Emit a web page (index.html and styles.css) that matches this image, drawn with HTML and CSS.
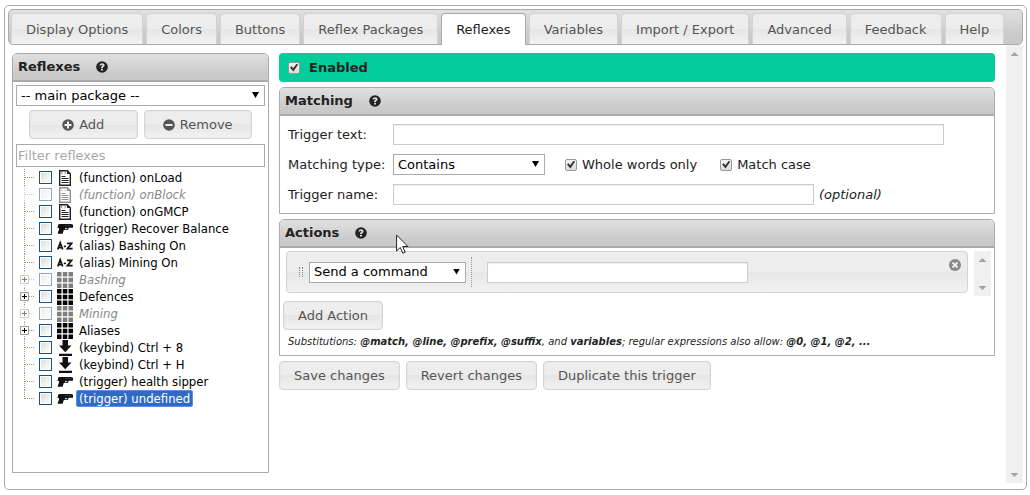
FILE: index.html
```html
<!DOCTYPE html>
<html lang="en">
<head>
<meta charset="utf-8">
<title>Reflexes</title>
<link rel="stylesheet" href="styles.css">
</head>
<body>
<svg class="defs" aria-hidden="true">
  <symbol id="help" viewBox="0 0 12 12"><circle cx="6" cy="6" r="5.8" fill="#222"/><path d="M3.5 4.600C3.700 2.900 4.800 2.200 6.100 2.200c1.400 0 2.500.8 2.500 2.100 0 1.600-1.700 1.600-1.700 2.700H5c0-1.900 1.500-1.900 1.500-2.600 0-.4-.3-.6-.6-.6s-.6.3-.7.8zM5 7.700h1.900v1.700H5z" fill="#ddd"/></symbol>
  <symbol id="plus" viewBox="0 0 12 12"><circle cx="6" cy="6" r="5.8" fill="#555"/><path d="M5 2.500h2V5h2.500v2H7v2.500H5V7H2.500V5H5z" fill="#eee"/></symbol>
  <symbol id="minus" viewBox="0 0 12 12"><circle cx="6" cy="6" r="5.8" fill="#555"/><path d="M2.500 5h7v2h-7z" fill="#eee"/></symbol>
  <symbol id="remove" viewBox="0 0 12 12"><circle cx="6" cy="6" r="6" fill="#888"/><path d="M4.200 2.800 6 4.600l1.800-1.800 1.400 1.400L7.400 6l1.800 1.800-1.400 1.400L6 7.400 4.200 9.200 2.800 7.800 4.600 6 2.800 4.200z" fill="#eee"/></symbol>
  <symbol id="script" viewBox="0 0 16 16"><path d="M2.700.7h7.600l3 3v11.600H2.700z" fill="#fff" stroke="#222" stroke-width="1.400"/><path d="M10 .5V4h3.500z" fill="#222"/><path d="m5.500 2-1.200 1 1.200 1M7.500 2l1.200 1-1.200 1" fill="none" stroke="#555" stroke-width=".8"/><path d="M4.500 6.500h4M4.500 8.500h7M4.500 10.500h7M4.500 12.500h7" stroke="#222"/></symbol>
  <symbol id="gun" viewBox="0 0 16 16"><path d="M1 3.500h1l.5-.5h12l.3.500H16v3.200h-4.300c-.2 1.600-.8 2.300-2 2.300H6.800L5.600 12.700H.8c-.3-.8.8-2.700 1.200-4.200L1.900 7 0 6.500l1-1z" fill="#111"/><path d="M8 7.300h2.400c0 .8-.4 1-1 1H7.700z" fill="#fff"/><path d="M8 4.500h6" stroke="#555" stroke-width=".5"/></symbol>
  <symbol id="az" viewBox="0 0 16 16"><path d="M.8 11.500 3.200 4.800l2.500 6.700M1.800 9.600h3M10 5.300h4.600L10.400 10.700H15.600" fill="none" stroke="#111" stroke-width="1.700"/><path d="M6.800 7.600h2.200v1.600H6.800z" fill="#111"/></symbol>
  <symbol id="grid" viewBox="0 0 16 16"><path d="M0 0h4.500v4.500H0zM5.800 0h4.500v4.500H5.800zM11.500 0H16v4.500h-4.500zM0 5.800h4.500v4.500H0zM5.800 5.800h4.500v4.500H5.800zM11.500 5.800H16v4.500h-4.500zM0 11.500h4.500V16H0zM5.800 11.500h4.500V16H5.800zM11.500 11.500H16V16h-4.500z" fill="#000"/></symbol>
  <symbol id="key" viewBox="0 0 16 16"><path d="M5.500 0h5.500v5.500h3.500L8.200 12.300 2 5.500h3.500zM2 13.800h13V16H2z" fill="#111"/></symbol>
  <symbol id="mid" viewBox="0 0 15 17"><path d="M4.500 0v17M5 8.500h10" stroke="#a09c84" stroke-dasharray="1 1"/></symbol>
  <symbol id="end" viewBox="0 0 15 17"><path d="M4.500 0v9M5 8.500h10" stroke="#a09c84" stroke-dasharray="1 1"/></symbol>
  <symbol id="fold" viewBox="0 0 15 17"><path d="M4.500 0v17M9 8.500h6" stroke="#a09c84" stroke-dasharray="1 1"/><path d="M.5 4.500h8v8h-8z" fill="#fff" stroke="#a09c84"/><path d="M2 8.500h5M4.500 6v5" stroke="#000"/></symbol>
</svg>

<div class="app">
  <nav class="tabs">
    <a class="tab" href="#display">Display Options</a>
    <a class="tab" href="#colors">Colors</a>
    <a class="tab" href="#buttons">Buttons</a>
    <a class="tab" href="#packages">Reflex Packages</a>
    <a class="tab active" href="#reflexes" aria-current="page">Reflexes</a>
    <a class="tab" href="#variables">Variables</a>
    <a class="tab" href="#import">Import / Export</a>
    <a class="tab" href="#advanced">Advanced</a>
    <a class="tab" href="#feedback">Feedback</a>
    <a class="tab" href="#help-tab">Help</a>
  </nav>

  <main class="content">
    <section class="panel sidebar">
      <h2 class="panel-title">Reflexes <svg class="help"><use href="#help"/></svg></h2>
      <div class="sidebar-body">
        <div class="select-box"><select class="field" aria-label="Package"><option>-- main package --</option></select></div>
        <div class="pair">
          <button class="btn small" type="button"><svg class="glyph"><use href="#plus"/></svg>Add</button>
          <button class="btn small" type="button"><svg class="glyph"><use href="#minus"/></svg>Remove</button>
        </div>
        <input class="field filter" type="text" placeholder="Filter reflexes" aria-label="Filter reflexes">
        <ul class="tree">
          <li class="node"><svg class="branch"><use href="#mid"/></svg><input id="n1" class="tick" type="checkbox"><svg class="icon"><use href="#script"/></svg><label class="name" for="n1">(function) onLoad</label></li>
          <li class="node off"><svg class="branch"><use href="#mid"/></svg><input id="n2" class="tick" type="checkbox"><svg class="icon"><use href="#script"/></svg><label class="name" for="n2">(function) onBlock</label></li>
          <li class="node"><svg class="branch"><use href="#mid"/></svg><input id="n3" class="tick" type="checkbox"><svg class="icon"><use href="#script"/></svg><label class="name" for="n3">(function) onGMCP</label></li>
          <li class="node"><svg class="branch"><use href="#mid"/></svg><input id="n4" class="tick" type="checkbox"><svg class="icon"><use href="#gun"/></svg><label class="name" for="n4">(trigger) Recover Balance</label></li>
          <li class="node"><svg class="branch"><use href="#mid"/></svg><input id="n5" class="tick" type="checkbox"><svg class="icon"><use href="#az"/></svg><label class="name" for="n5">(alias) Bashing On</label></li>
          <li class="node"><svg class="branch"><use href="#mid"/></svg><input id="n6" class="tick" type="checkbox"><svg class="icon"><use href="#az"/></svg><label class="name" for="n6">(alias) Mining On</label></li>
          <li class="node off"><svg class="branch"><use href="#fold"/></svg><input id="n7" class="tick" type="checkbox"><svg class="icon"><use href="#grid"/></svg><label class="name" for="n7">Bashing</label></li>
          <li class="node"><svg class="branch"><use href="#fold"/></svg><input id="n8" class="tick" type="checkbox"><svg class="icon"><use href="#grid"/></svg><label class="name" for="n8">Defences</label></li>
          <li class="node off"><svg class="branch"><use href="#fold"/></svg><input id="n9" class="tick" type="checkbox"><svg class="icon"><use href="#grid"/></svg><label class="name" for="n9">Mining</label></li>
          <li class="node"><svg class="branch"><use href="#fold"/></svg><input id="n10" class="tick" type="checkbox"><svg class="icon"><use href="#grid"/></svg><label class="name" for="n10">Aliases</label></li>
          <li class="node"><svg class="branch"><use href="#mid"/></svg><input id="n11" class="tick" type="checkbox"><svg class="icon"><use href="#key"/></svg><label class="name" for="n11">(keybind) Ctrl + 8</label></li>
          <li class="node"><svg class="branch"><use href="#mid"/></svg><input id="n12" class="tick" type="checkbox"><svg class="icon"><use href="#key"/></svg><label class="name" for="n12">(keybind) Ctrl + H</label></li>
          <li class="node"><svg class="branch"><use href="#mid"/></svg><input id="n13" class="tick" type="checkbox"><svg class="icon"><use href="#gun"/></svg><label class="name" for="n13">(trigger) health sipper</label></li>
          <li class="node"><svg class="branch"><use href="#end"/></svg><input id="n14" class="tick" type="checkbox"><svg class="icon"><use href="#gun"/></svg><label class="name selected" for="n14">(trigger) undefined</label></li>
        </ul>
      </div>
    </section>

    <form class="editor">
      <div class="enabled"><input id="enabled" class="check" type="checkbox" checked><label for="enabled">Enabled</label></div>

      <section class="panel">
        <h2 class="panel-title">Matching <svg class="help"><use href="#help"/></svg></h2>
        <div class="matching">
          <label for="text">Trigger text:</label>
          <div class="cell"><input id="text" class="field sunken long" type="text"></div>
          <label for="type">Matching type:</label>
          <div class="cell">
            <div class="select-box type"><select id="type" class="field"><option>Contains</option></select></div>
            <span class="option"><input id="whole" class="check" type="checkbox" checked><label for="whole">Whole words only</label></span>
            <span class="option"><input id="case" class="check" type="checkbox" checked><label for="case">Match case</label></span>
          </div>
          <label for="name">Trigger name:</label>
          <div class="cell"><input id="name" class="field sunken medium" type="text"><em class="hint">(optional)</em></div>
        </div>
      </section>

      <section class="panel">
        <h2 class="panel-title">Actions <svg class="help"><use href="#help"/></svg></h2>
        <div class="action-list">
          <div class="action">
            <span class="grip"></span>
            <div class="select-box verb"><select class="field" aria-label="Action"><option>Send a command</option></select></div>
            <span class="divider"></span>
            <input class="field sunken command" type="text" aria-label="Command">
            <button class="remove" type="button" aria-label="Remove action"><svg class="glyph-remove"><use href="#remove"/></svg></button>
          </div>
          <div class="scroll"><span class="up"></span><span class="down"></span></div>
        </div>
        <div class="action-foot">
          <button class="btn" type="button">Add Action</button>
          <p class="note">Substitutions: <b>@match, @line, @prefix, @suffix</b>, and <b>variables</b>; regular expressions also allow: <b>@0, @1, @2, ...</b></p>
        </div>
      </section>

      <div class="buttons">
        <button class="btn" type="button">Save changes</button>
        <button class="btn" type="button">Revert changes</button>
        <button class="btn" type="button">Duplicate this trigger</button>
      </div>
    </form>

    <div class="scroll page-scroll"><span class="up"></span><span class="down"></span></div>
  </main>
</div>
<svg class="pointer" viewBox="0 0 13 20"><path d="M.6 1v16l3.700-3.500L6.800 19.200l2.400-1L6.700 12.500h5.200z" fill="#fff" stroke="#222"/></svg>
</body>
</html>
```
FILE: styles.css
```css
* { box-sizing: border-box; }

body {
  margin: 0;
  padding: 5px 3px 5px 4px;
  background: #fff;
  color: #222;
  font: 13px/18px Verdana, "DejaVu Sans", sans-serif;
}

.defs { display: none; }

.app {
  display: flex;
  flex-direction: column;
  min-height: calc(100vh - 10px);
  padding: 3px 3px 6px;
  border: 1px solid #aaa;
  border-radius: 5px;
}

.tabs {
  display: flex;
  gap: 3px;
  height: 36px;
  padding: 3px 2px 0;
  border: 1px solid #aaa;
  border-radius: 5px;
  background: linear-gradient(#e0e0e0, #c9c9c9 80%);
}

.tab {
  height: 31px;
  padding: 7px 14px 0;
  border: 1px solid #d3d3d3;
  border-bottom: 0;
  border-radius: 4px 4px 0 0;
  background: linear-gradient(#ededed 50%, #e6e6e6 50%, #f2f2f2);
  color: #555;
  text-decoration: none;
  white-space: nowrap;
}

.tab.active {
  height: 32px;
  border-color: #aaa;
  background: #fff;
  color: #212121;
}

.content {
  display: flex;
  flex: 1;
  align-items: stretch;
}

.panel {
  border: 1px solid #aaa;
  border-radius: 5px 5px 0 0;
  background: #fff;
}

.panel-title {
  display: flex;
  align-items: center;
  gap: 16px;
  height: 28px;
  margin: 0;
  padding: 0 5px;
  border-bottom: 2px solid #aaa;
  border-radius: 4px 4px 0 0;
  background: linear-gradient(#e0e0e0, #c9c9c9 80%);
  font-size: 13px;
}

.help { width: 12px; height: 12px; }

.sidebar {
  width: 257px;
  margin: 8px 10px 10px 4px;
}

.sidebar-body { padding: 3px; }

.field {
  display: block;
  width: 100%;
  height: 21px;
  margin: 0;
  padding: 0 4px;
  border: 1px solid #aaa;
  border-radius: 0;
  background: #fff;
  color: #000;
  font: inherit;
  appearance: none;
}

.sunken {
  border-color: #ccc;
  box-shadow: inset 0 1px 1px #eee;
}

.select-box { position: relative; }

.select-box::after {
  content: "";
  position: absolute;
  top: 7px;
  right: 6px;
  width: 7px;
  height: 6px;
  background: #000;
  clip-path: polygon(0 0, 100% 0, 50% 100%);
  pointer-events: none;
}

.pair {
  display: flex;
  gap: 6px;
  padding: 4px 13px 5px;
}

.btn {
  display: inline-flex;
  align-items: center;
  justify-content: center;
  gap: 5px;
  height: 29px;
  padding: 0 14px;
  border: 1px solid #d3d3d3;
  border-radius: 4px;
  background: linear-gradient(#ededed 50%, #e6e6e6 50%, #f2f2f2);
  box-shadow: inset 0 0 1px #ccc;
  color: #555;
  font: inherit;
  white-space: nowrap;
}

.btn.small { flex: 1; }

.glyph { width: 12px; height: 12px; }

.filter { height: 23px; padding: 0 1px; }

.filter::placeholder { color: #a9a9a9; }

.tree {
  margin: 0;
  padding: 2px 4px;
  list-style: none;
  color: #000;
  font: 13px/15px "DejaVu Sans Condensed", "DejaVu Sans", sans-serif;
  font-stretch: condensed;
}

.node {
  display: flex;
  align-items: center;
  height: 17px;
}

.branch { width: 15px; height: 17px; }

.tick {
  width: 13px;
  height: 13px;
  margin: 0 5px 0 4px;
  padding: 1px;
  border: 1px solid #1c5180;
  background: linear-gradient(135deg, #dcdcd7, #fff) content-box;
  appearance: none;
}

.icon { width: 16px; height: 16px; }

.name {
  margin-left: 3px;
  padding: 0 2px;
  border: 1px solid transparent;
  white-space: nowrap;
}

.off .name { color: #888; font-style: italic; }

.off .tick, .off .icon, .off .branch { opacity: 0.5; }

.name.selected {
  border-color: #5a90e8;
  border-radius: 2px;
  background: #316ac5;
  color: #fff;
}

.editor {
  display: flex;
  flex: 1;
  flex-direction: column;
  gap: 5px;
  min-width: 0;
  padding-top: 8px;
}

.enabled {
  display: flex;
  align-items: center;
  gap: 9px;
  height: 29px;
  padding: 0 9px;
  border-radius: 4px;
  background: #00cd9a;
  font-weight: bold;
}

.check {
  position: relative;
  width: 12px;
  height: 12px;
  margin: 0;
  border: 1px solid #999;
  border-radius: 2px;
  background: linear-gradient(#f2f2f2, #ddd);
  appearance: none;
}

.check:checked::before {
  content: "";
  position: absolute;
  inset: 1px;
  background: #333;
  clip-path: polygon(0 50%, 20% 35%, 40% 60%, 85% 0, 100% 15%, 42% 100%);
}

.matching {
  display: grid;
  grid-template-columns: 101px 1fr;
  gap: 9px 4px;
  align-items: center;
  padding: 8px;
}

.matching label { white-space: nowrap; }

.cell { display: flex; align-items: center; }

.long { width: 93%; }

.medium { width: 421px; }

.type { width: 152px; margin-right: 20px; }

.option {
  display: flex;
  align-items: center;
  gap: 5px;
  margin-right: 23px;
}

.hint { margin-left: 5px; }

.action-list {
  display: flex;
  gap: 6px;
  padding: 3px 3px 0 6px;
}

.action {
  display: flex;
  flex: 1;
  align-items: center;
  height: 42px;
  padding: 0 6px 0 12px;
  border: 1px solid #d3d3d3;
  border-radius: 4px;
  background: linear-gradient(#ededed 50%, #e6e6e6 50%, #f2f2f2);
}

.grip {
  width: 4px;
  height: 10px;
  border: dotted #888;
  border-width: 0 1px;
}

.verb { width: 157px; margin-left: 6px; }

.divider {
  height: 30px;
  margin: 0 15px 0 5px;
  border-left: 1px dotted #999;
}

.command { width: 261px; }

.remove {
  align-self: flex-start;
  height: 12px;
  margin: 7px 0 0 auto;
  padding: 0;
  border: 0;
  background: none;
}

.glyph-remove { display: block; width: 12px; height: 12px; }

.scroll {
  display: flex;
  flex-direction: column;
  justify-content: space-between;
  align-items: center;
  width: 17px;
  height: 45px;
  padding: 7px 0 6px;
  background: #f0f0f0;
}

.up, .down {
  width: 8px;
  height: 4px;
  background: #a3a3a3;
  clip-path: polygon(50% 0, 100% 100%, 0 100%);
}

.down { clip-path: polygon(0 0, 100% 0, 50% 100%); }

.page-scroll { height: auto; margin-left: 11px; }

.action-foot { padding: 5px 3px 6px; }

.note {
  margin: 5px 5px 0;
  font-size: 10px;
  font-style: italic;
  line-height: 14px;
}

.buttons { display: flex; gap: 6px; }

.pointer {
  position: absolute;
  top: 234px;
  left: 396px;
  width: 13px;
  height: 20px;
  pointer-events: none;
}
```
